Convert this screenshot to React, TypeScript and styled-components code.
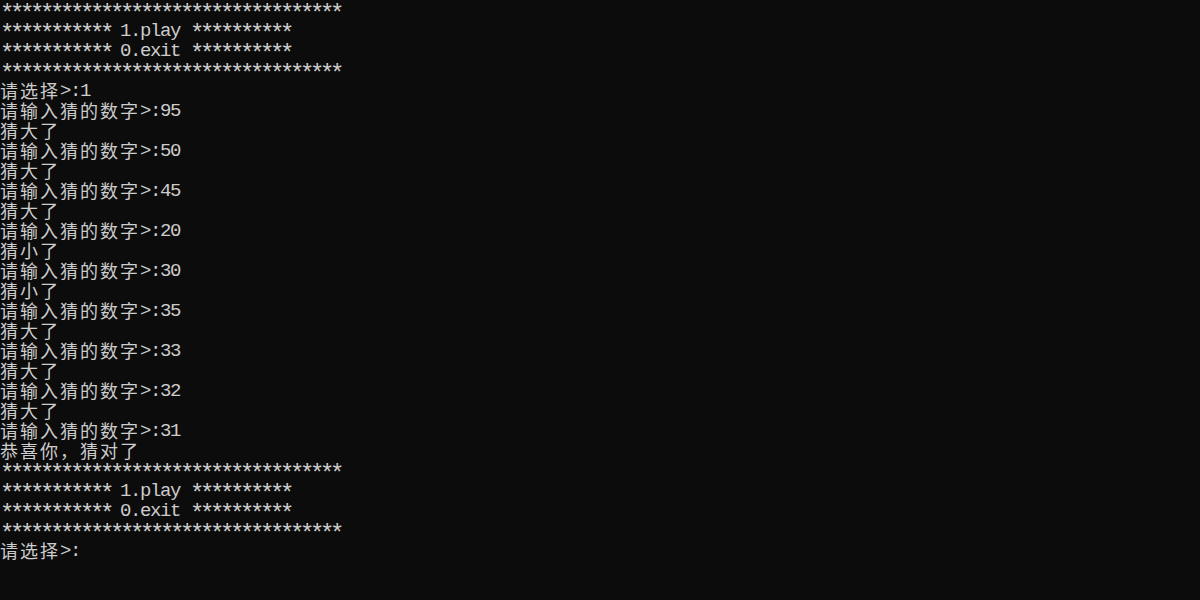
import React from 'react';
import styled, { createGlobalStyle } from 'styled-components';

const GlobalStyle = createGlobalStyle`
    html, body {
        margin: 0;
        padding: 0;
        background: #0c0c0c;
    }
`;

const Console = styled.div`
    width: 1200px;
    height: 600px;
    background: #0c0c0c;
    color: #cccccc;
    font-family: 'Liberation Mono', 'DejaVu Sans Mono', monospace;
    overflow: hidden;
`;

const Line = styled.div`
    height: 20px;
    white-space: pre;
    display: flex;
    align-items: flex-start;
`;

const Cell = styled.span<{ $lift?: number }>`
    display: block;
    height: 20px;
    overflow: visible;
`;

const Wide = styled(Cell)`
    font-family: 'Noto Sans CJK SC', sans-serif;
    font-size: 18px;
    line-height: 20px;
    letter-spacing: 2px;
`;

const Narrow = styled(Cell)`
    font-size: 19px;
    line-height: 22px;
    letter-spacing: -1.4px;
`;

const Stars = styled(Cell)`
    font-size: 24px;
    line-height: 30px;
    letter-spacing: -4.4px;
`;

const stars = '*'.repeat(34);
const menu = [stars, '*********** 1.play **********', '*********** 0.exit **********', stars];

const guesses: [string, string][] = [
    ['95', '猜大了'],
    ['50', '猜大了'],
    ['45', '猜大了'],
    ['20', '猜小了'],
    ['30', '猜小了'],
    ['35', '猜大了'],
    ['33', '猜大了'],
    ['32', '猜大了'],
    ['31', '恭喜你，猜对了'],
];

const lines: string[] = [
    ...menu,
    '请选择>:1',
    ...guesses.flatMap(([n, r]) => [`请输入猜的数字>:${n}`, r]),
    ...menu,
    '请选择>:',
];

type Kind = 'wide' | 'star' | 'narrow';

// split text into runs of full-width, asterisk and other half-width characters
const splitRuns = (text: string) => {
    const runs: { kind: Kind; text: string }[] = [];
    for (const ch of text) {
        const kind: Kind = ch.charCodeAt(0) > 0x2e80 ? 'wide' : ch === '*' ? 'star' : 'narrow';
        const last = runs[runs.length - 1];
        if (last && last.kind === kind) last.text += ch;
        else runs.push({ kind, text: ch });
    }
    return runs;
};

const ConsoleLine = ({ text }: { text: string }) => (
    <Line>
        {splitRuns(text).map((run, i) => {
            if (run.kind === 'wide') return <Wide key={i}>{run.text}</Wide>;
            if (run.kind === 'star') return <Stars key={i}>{run.text}</Stars>;
            return <Narrow key={i}>{run.text}</Narrow>;
        })}
    </Line>
);

export default function App() {
    return (
        <>
            <GlobalStyle />
            <Console>
                {lines.map((l, i) => (
                    <ConsoleLine key={i} text={l} />
                ))}
            </Console>
        </>
    );
}
